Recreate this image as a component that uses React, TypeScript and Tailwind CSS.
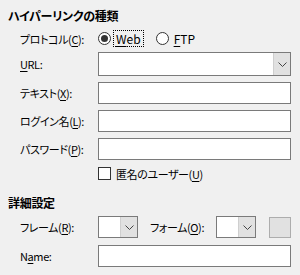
import React from "react";

const font = "font-['Yu_Gothic_UI','Noto_Sans_CJK_JP',sans-serif] [font-feature-settings:'palt']";

function U({ children }: { children: React.ReactNode }) {
  return <span className="underline underline-offset-2">{children}</span>;
}

function Chevron() {
  return (
    <svg width="9" height="5" viewBox="0 0 9 5" className="block">
      <path d="M0.5 0.5 L4.5 4.5 L8.5 0.5" fill="none" stroke="#444" strokeWidth="1" />
    </svg>
  );
}

function Combo({ className }: { className: string }) {
  return (
    <div className={"flex border border-[#7a7a7a] bg-white " + className}>
      <div className="flex-1" />
      <div className="w-[17px] flex items-center justify-center bg-[#e1e1e1] border-l border-[#cfcfcf]">
        <Chevron />
      </div>
    </div>
  );
}

function Field() {
  return <div className="flex-1 h-[22px] border border-[#7a7a7a] bg-white" />;
}

function Row({ label, children, mt }: { label: React.ReactNode; children: React.ReactNode; mt: string }) {
  return (
    <div className={"flex items-center " + mt}>
      <div className="w-[78px] shrink-0">{label}</div>
      {children}
    </div>
  );
}

export default function App() {
  return (
    <div className={"w-[300px] h-[275px] bg-[#f0f0f0] text-[11px] tracking-[-0.4px] leading-[16px] text-black px-2 pt-[8px] " + font}>
      <div className="font-bold text-[12px] tracking-[-0.3px] h-[16px]">ハイパーリンクの種類</div>
      <div className="pl-3 pr-[1px]">
        <Row label={<>プロトコル(<U>C</U>):</>} mt="mt-[6px]">
          <div className="flex items-center h-[17px] text-[12px] tracking-normal">
            <div className="w-[13px] h-[13px] rounded-full border border-[#333] bg-white flex items-center justify-center">
              <div className="w-[7px] h-[7px] rounded-full bg-[#333]" />
            </div>
            <div className="ml-[2px] px-[2px] h-[17px] flex items-center border border-dotted border-black">
              <U>W</U>eb
            </div>
            <div className="ml-[12px] w-[13px] h-[13px] rounded-full border border-[#333] bg-white" />
            <div className="ml-[5px]"><U>F</U>TP</div>
          </div>
        </Row>
        <Row label={<><U>U</U>RL:</>} mt="mt-[5px]">
          <Combo className="flex-1 h-[24px]" />
        </Row>
        <Row label={<>テキスト(<U>X</U>):</>} mt="mt-[6px]">
          <Field />
        </Row>
        <Row label={<>ログイン名(<U>L</U>):</>} mt="mt-[6px]">
          <Field />
        </Row>
        <Row label={<>パスワード(<U>P</U>):</>} mt="mt-[6px]">
          <Field />
        </Row>
        <Row label={null} mt="mt-[5px]">
          <div className="flex items-center h-[17px]">
            <div className="w-[13px] h-[13px] border border-[#333] bg-white" />
            <div className="ml-[5px]">匿名のユーザー(<U>U</U>)</div>
          </div>
        </Row>
      </div>
      <div className="font-bold text-[12px] tracking-[-0.3px] h-[16px] mt-[13px]">詳細設定</div>
      <div className="pl-3 pr-[1px]">
        <Row label={<>フレーム(<U>R</U>):</>} mt="mt-[5px]">
          <Combo className="w-[40px] h-[22px]" />
          <div className="ml-[12px] w-[66px]">フォーム(<U>O</U>):</div>
          <Combo className="w-[40px] h-[22px]" />
          <div className="ml-auto w-[22px] h-[21px] bg-[#e1e1e1] border border-[#adadad]" />
        </Row>
        <Row label={<>N<U>a</U>me:</>} mt="mt-[7px]">
          <Field />
        </Row>
      </div>
    </div>
  );
}
